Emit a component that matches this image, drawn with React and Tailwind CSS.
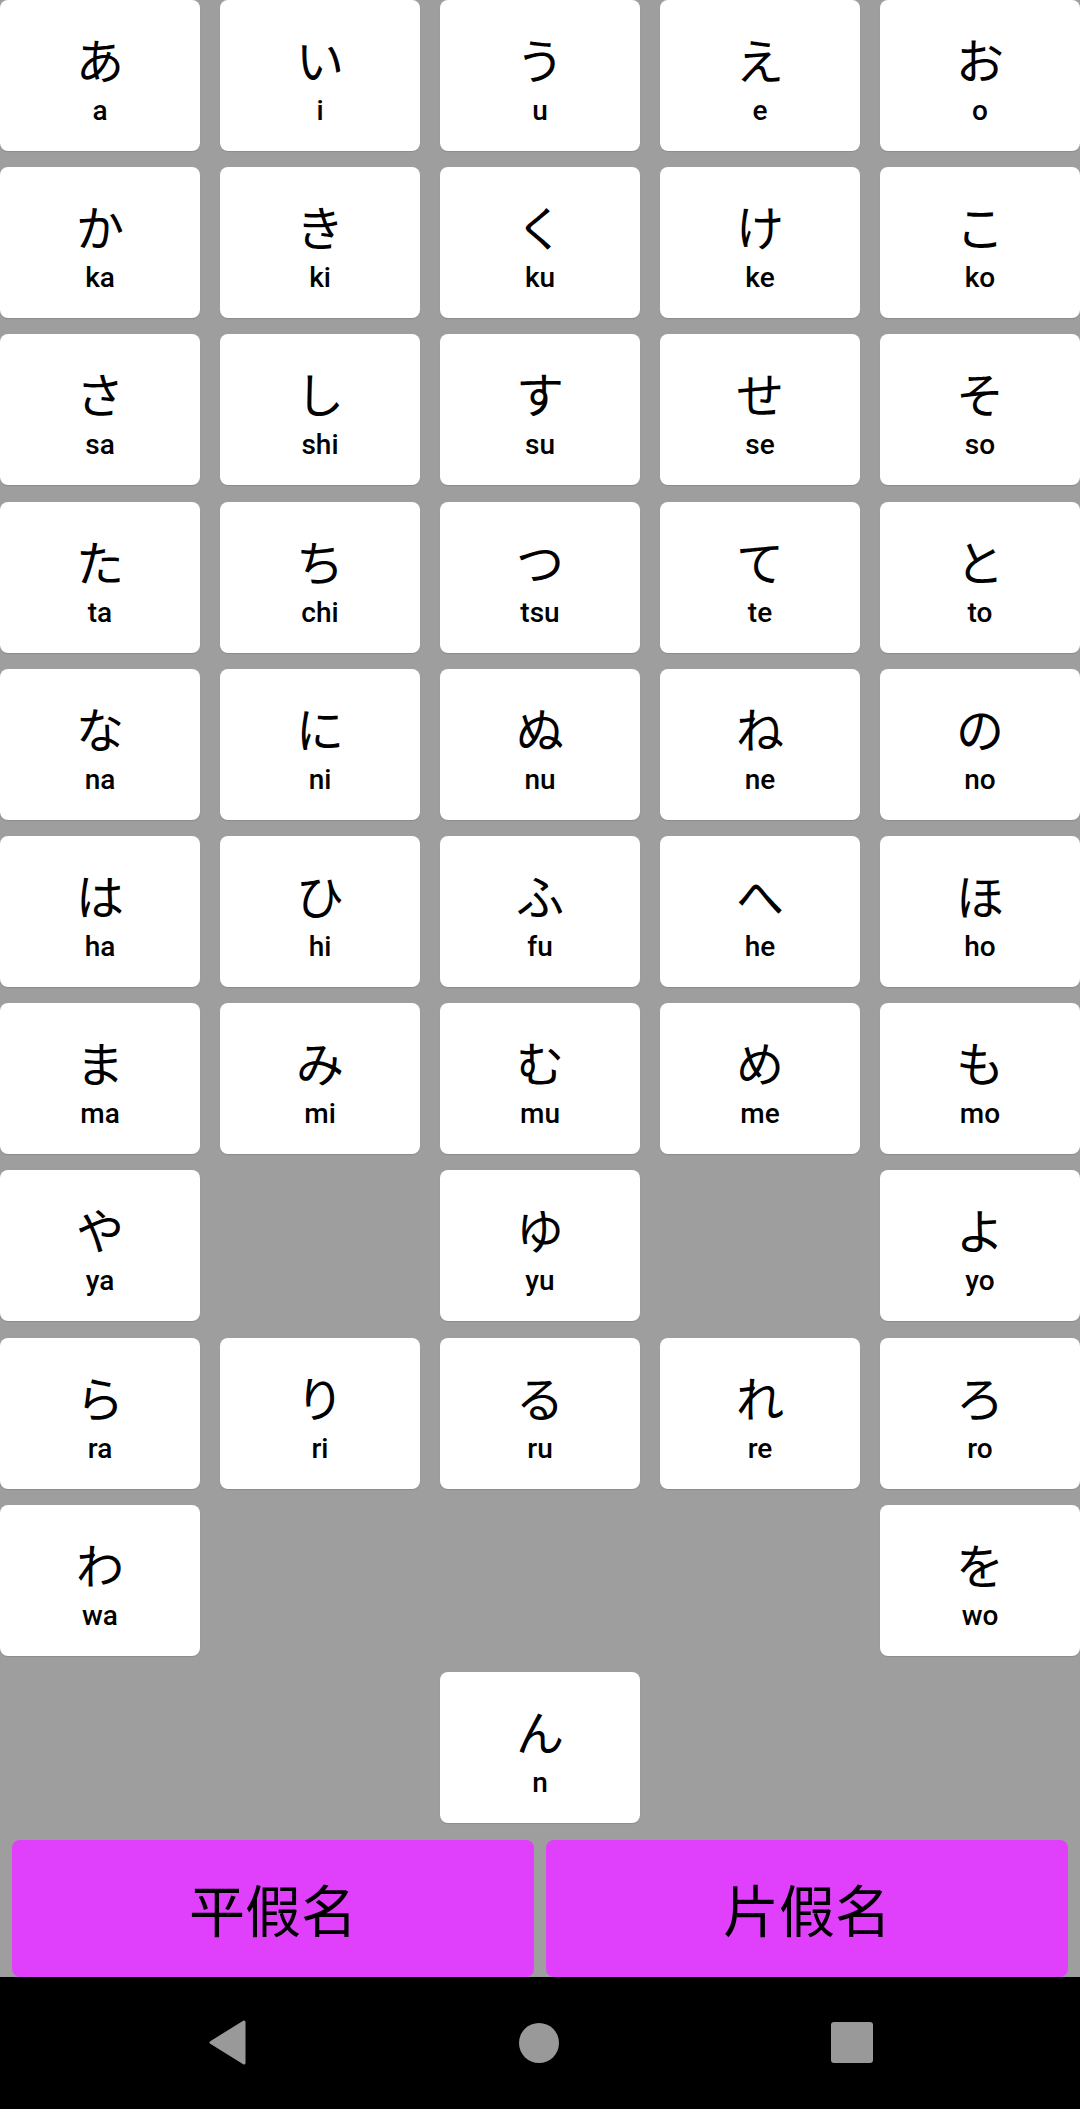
const rows = [
  [['あ', 'a'], ['い', 'i'], ['う', 'u'], ['え', 'e'], ['お', 'o']],
  [['か', 'ka'], ['き', 'ki'], ['く', 'ku'], ['け', 'ke'], ['こ', 'ko']],
  [['さ', 'sa'], ['し', 'shi'], ['す', 'su'], ['せ', 'se'], ['そ', 'so']],
  [['た', 'ta'], ['ち', 'chi'], ['つ', 'tsu'], ['て', 'te'], ['と', 'to']],
  [['な', 'na'], ['に', 'ni'], ['ぬ', 'nu'], ['ね', 'ne'], ['の', 'no']],
  [['は', 'ha'], ['ひ', 'hi'], ['ふ', 'fu'], ['へ', 'he'], ['ほ', 'ho']],
  [['ま', 'ma'], ['み', 'mi'], ['む', 'mu'], ['め', 'me'], ['も', 'mo']],
  [['や', 'ya'], null, ['ゆ', 'yu'], null, ['よ', 'yo']],
  [['ら', 'ra'], ['り', 'ri'], ['る', 'ru'], ['れ', 're'], ['ろ', 'ro']],
  [['わ', 'wa'], null, null, null, ['を', 'wo']],
  [null, null, ['ん', 'n'], null, null],
];

const KanaCell = ({ item }) => {
  if (!item) return <div className="h-[151px]" />;
  const [kana, romaji] = item;
  return (
    <div className="h-[151px] rounded-[8px] bg-white flex flex-col items-center pt-[34px] shadow-[0_1px_1px_rgba(0,0,0,0.12)]">
      <div className="text-[48px] leading-[48px] text-black font-['Noto_Sans_CJK_JP',sans-serif]">{kana}</div>
      <div className="mt-[14px] text-[28px] leading-[30px] font-medium text-black font-['Roboto',sans-serif]">{romaji}</div>
    </div>
  );
};

export default function App() {
  return (
    <div className="w-[1080px] h-[2109px] bg-[#9e9e9e] flex flex-col overflow-hidden">
      <div className="grid grid-cols-5 gap-x-[20px] gap-y-[16.2px]">
        {rows.flat().map((item, i) => <KanaCell key={i} item={item} />)}
      </div>

      <div className="mt-[17px] h-[137px] px-[12px] flex gap-[12px]">
        <button className="flex-1 rounded-[8px] bg-[#e040fb] flex items-center justify-center text-[56px] text-black font-['Noto_Sans_CJK_SC',sans-serif]">
          平假名
        </button>
        <button className="flex-1 rounded-[8px] bg-[#e040fb] flex items-center justify-center text-[56px] text-black font-['Noto_Sans_CJK_SC',sans-serif]">
          片假名
        </button>
      </div>

      <div className="h-[132px] bg-black flex items-center justify-center gap-[272px]">
        <svg width="39" height="45" viewBox="0 0 39 45">
          <polygon points="36,2 36,43 3,22.5" fill="#999" stroke="#999" strokeWidth="3" strokeLinejoin="round" />
        </svg>
        <div className="w-[40px] h-[40px] rounded-full bg-[#999]" />
        <div className="w-[42px] h-[41px] rounded-[3px] bg-[#999]" />
      </div>
    </div>
  );
}
